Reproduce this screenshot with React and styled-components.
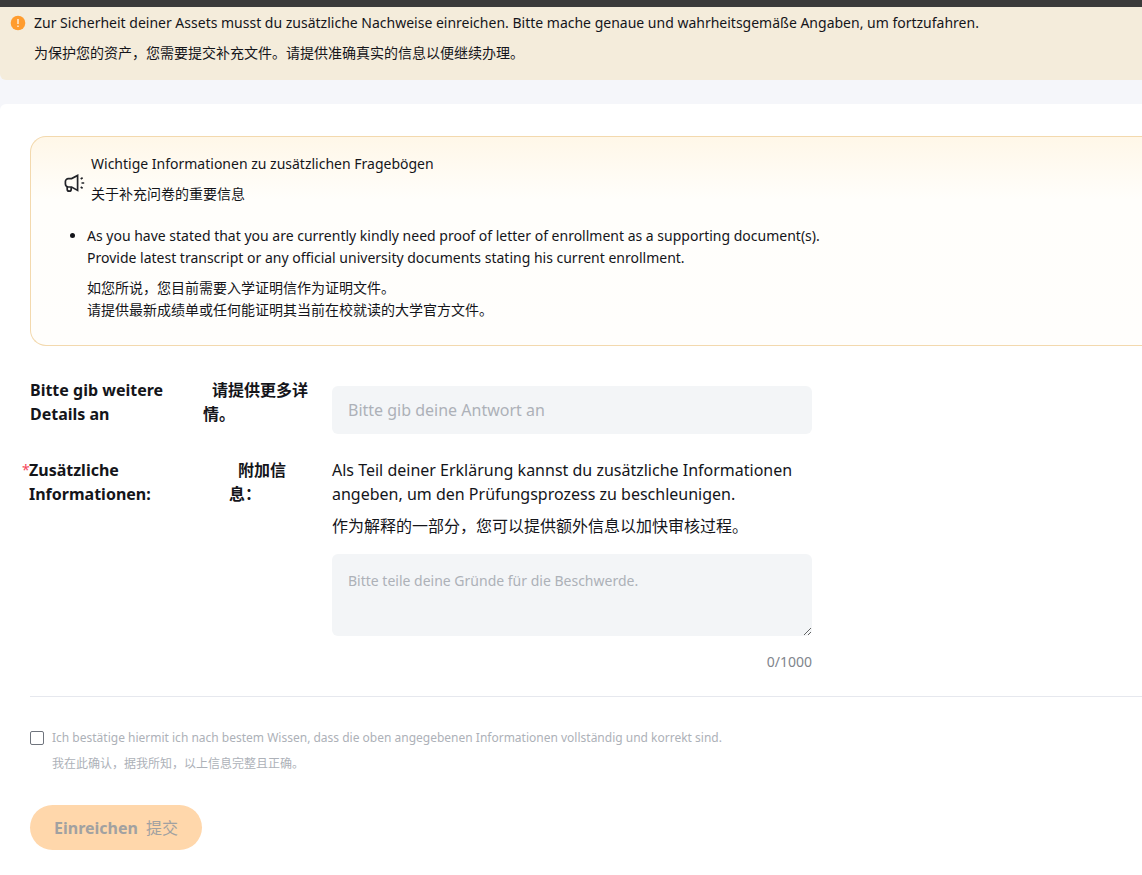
import { useState } from "react";
import styled, { createGlobalStyle } from "styled-components";

const GlobalStyle = createGlobalStyle`
	* {
		box-sizing: border-box;
	}
	body {
		margin: 0;
		background-color: #fff;
		color: #14151a;
		font-family: "Noto Sans", "Noto Sans CJK SC", sans-serif;
		font-size: 14px;
		line-height: 22px;
	}
	p {
		margin: 0;
	}
`;

const Page = styled.div`
	background-color: #f5f6fa;
`;

const TopBar = styled.div`
	height: 7px;
	background-color: #3b3b3b;
`;

const Banner = styled.div`
	display: flex;
	gap: 8px;
	padding: 5px 10px 16px;
	border-radius: 0 0 0 6px;
	background-color: #f4ecdb;
`;

const BannerIcon = styled.svg`
	flex: none;
	width: 16px;
	height: 22px;
`;

const Lines = styled.div`
	display: flex;
	flex-direction: column;
	gap: 8px;
`;

const Card = styled.main`
	margin-top: 24px;
	padding: 32px 0 25px 30px;
	border-radius: 6px 0 0 0;
	background-color: #fff;
`;

const Notice = styled.section`
	padding: 16px 32px 24px;
	border: 1px solid #f3d9ae;
	border-right: 0;
	border-radius: 16px 0 0 16px;
	background: linear-gradient(#fff7e8, #fffefb 30%, #fffefc);
`;

const NoticeHead = styled.div`
	display: flex;
	align-items: center;
	gap: 4px;
`;

const NoticeIcon = styled.svg`
	flex: none;
	width: 24px;
	height: 24px;
	margin-top: 8px;
`;

const NoticeList = styled.ul`
	margin: 20px 0 0;
	padding-left: 24px;
`;

const Row = styled.div`
	display: flex;
	gap: 16px;
	margin-top: ${(props) => props.$top};
	font-size: 16px;
	line-height: 24px;
`;

const Label = styled.label`
	display: grid;
	grid-template-columns: ${(props) => props.$columns};
	flex: none;
	width: 286px;
	font-weight: 700;
`;

const Chinese = styled.span`
	font-weight: 600;
	text-indent: 9px;
`;

const RequiredLabel = styled(Label)`
	width: 294px;
	margin-left: -8px;
`;

const Star = styled.span`
	color: #f5475b;
	font-size: 14px;
	font-weight: 400;
`;

const Control = styled.div`
	display: flex;
	flex: 0 1 480px;
	flex-direction: column;
`;

const Input = styled.input`
	width: 100%;
	height: 48px;
	margin-top: 8px;
	padding: 0 16px;
	border: 0;
	border-radius: 6px;
	background-color: #f3f5f7;
	color: inherit;
	font: inherit;
	&::placeholder {
		color: #adb1b8;
	}
`;

const TextArea = styled.textarea`
	display: block;
	width: 100%;
	height: 82px;
	margin-top: 16px;
	padding: 16px;
	border: 0;
	border-radius: 6px;
	background-color: #f3f5f7;
	color: inherit;
	font: inherit;
	font-size: 14px;
	line-height: 22px;
	resize: vertical;
	&::placeholder {
		color: #adb1b8;
	}
`;

const Translation = styled.p`
	margin-top: 8px;
`;

const Counter = styled.span`
	align-self: flex-end;
	margin-top: 14px;
	color: #81858c;
	font-size: 14px;
`;

const Divider = styled.hr`
	margin: 22px 0 32px;
	border: 0;
	border-top: 1px solid #e6e8ee;
`;

const Confirm = styled.label`
	display: flex;
	gap: 8px;
	color: #adb1b8;
	font-size: 12px;
	line-height: 18px;
`;

const Checkbox = styled.input.attrs({ type: "checkbox" })`
	appearance: none;
	flex: none;
	width: 14px;
	height: 14px;
	margin: 2px 0 0;
	border: 1px solid #6f747d;
	border-radius: 2px;
	background-color: #fff;
	&:checked {
		border-color: #ff9c2e;
		background-color: #ff9c2e;
	}
`;

const Submit = styled.button`
	display: flex;
	align-items: center;
	gap: 8px;
	height: 45px;
	margin-top: 32px;
	padding: 0 24px;
	border: 0;
	border-radius: 23px;
	background-color: #ff9c2e;
	color: #14151a;
	font: inherit;
	font-size: 16px;
	font-weight: 700;
	&:disabled {
		background-color: #ffd7ab;
		color: #a1a1a1;
	}
`;

const Plain = styled.span`
	font-weight: 400;
`;

function App() {
	const [reason, setReason] = useState("");
	const [confirmed, setConfirmed] = useState(false);

	return (
		<Page>
			<GlobalStyle />
			<TopBar />
			<Banner>
				<BannerIcon viewBox="0 0 16 22" aria-hidden="true">
					<circle cx="8" cy="11" r="7.3" fill="#ff9c2e" />
					<path d="M8 7v5M8 13.4v1.6" stroke="#ffe0bd" strokeWidth="1.8" />
				</BannerIcon>
				<Lines>
					<p>
						Zur Sicherheit deiner Assets musst du zusätzliche Nachweise einreichen. Bitte mache genaue und
						wahrheitsgemäße Angaben, um fortzufahren.
					</p>
					<p lang="zh">为保护您的资产，您需要提交补充文件。请提供准确真实的信息以便继续办理。</p>
				</Lines>
			</Banner>
			<Card>
				<Notice>
					<NoticeHead>
						<NoticeIcon viewBox="0 0 24 24" fill="none" stroke="#222328" strokeWidth="1.7" aria-hidden="true">
							<path d="M14.6 4.4v15L8.6 16H5.4a3 3 0 0 1-3-3v-2.400a3 3 0 0 1 3-3h3.200z" />
							<path d="M4.200 15.800v2.400a2 2 0 0 0 4 0v-2.200" />
							<path d="M18.500 12h2.700M17.700 8l1.900-1.200M17.700 16l1.900 1.200" />
						</NoticeIcon>
						<Lines>
							<p>Wichtige Informationen zu zusätzlichen Fragebögen</p>
							<p lang="zh">关于补充问卷的重要信息</p>
						</Lines>
					</NoticeHead>
					<NoticeList>
						<li>
							<Lines>
								<p>
									As you have stated that you are currently kindly need proof of letter of enrollment as a
									supporting document(s).
									<br />
									Provide latest transcript or any official university documents stating his current
									enrollment.
								</p>
								<p lang="zh">
									如您所说，您目前需要入学证明信作为证明文件。
									<br />
									请提供最新成绩单或任何能证明其当前在校就读的大学官方文件。
								</p>
							</Lines>
						</li>
					</NoticeList>
				</Notice>
				<Row $top="32px">
					<Label htmlFor="details" $columns="173px 1fr">
						<span>
							Bitte gib weitere
							<br />
							Details an
						</span>
						<Chinese lang="zh">请提供更多详情。</Chinese>
					</Label>
					<Control>
						<Input id="details" placeholder="Bitte gib deine Antwort an" />
					</Control>
				</Row>
				<Row $top="24px">
					<RequiredLabel htmlFor="reason" $columns="7px 200px 1fr">
						<Star>*</Star>
						<span>
							Zusätzliche
							<br />
							Informationen:
						</span>
						<Chinese lang="zh">附加信息：</Chinese>
					</RequiredLabel>
					<Control>
						<p>
							Als Teil deiner Erklärung kannst du zusätzliche Informationen angeben, um den Prüfungsprozess zu
							beschleunigen.
						</p>
						<Translation lang="zh">作为解释的一部分，您可以提供额外信息以加快审核过程。</Translation>
						<TextArea
							id="reason"
							maxLength={1000}
							placeholder="Bitte teile deine Gründe für die Beschwerde."
							value={reason}
							onChange={(e) => setReason(e.target.value)}
						/>
						<Counter>{reason.length}/1000</Counter>
					</Control>
				</Row>
				<Divider />
				<Confirm>
					<Checkbox checked={confirmed} onChange={(e) => setConfirmed(e.target.checked)} />
					<Lines>
						<span>
							Ich bestätige hiermit ich nach bestem Wissen, dass die oben angegebenen Informationen vollständig und
							korrekt sind.
						</span>
						<span lang="zh">我在此确认，据我所知，以上信息完整且正确。</span>
					</Lines>
				</Confirm>
				<Submit disabled={!confirmed}>
					Einreichen <Plain lang="zh">提交</Plain>
				</Submit>
			</Card>
		</Page>
	);
}

export default App;
